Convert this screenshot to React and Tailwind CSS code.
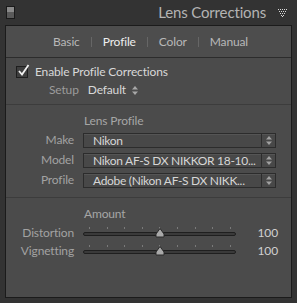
import React from 'react';

const font = { fontFamily: 'Lato, "Liberation Sans", sans-serif', letterSpacing: '-0.15px' };

const Stepper = ({ className = '' }) => (
  <svg width="6" height="9" viewBox="0 0 6 9" className={className}>
    <path d="M3 0 L6 3.5 L0 3.5 Z" fill="currentColor" />
    <path d="M3 9 L6 5.5 L0 5.5 Z" fill="currentColor" />
  </svg>
);

const Select = ({ label, value }) => (
  <div className="flex items-center h-[20px]">
    <div className="w-[68px] text-right text-[#a2a2a2] text-[12px]">{label}</div>
    <div className="ml-[9px] w-[193px] h-[15px] flex border border-[#2c2c2c] bg-[#484848] shadow-[inset_0_1px_0_#555]">
      <div className="flex-1 pl-[9px] text-[12px] leading-[14px] text-[#d6d6d6] whitespace-nowrap tracking-[-0.3px]">{value}</div>
      <div className="w-[14px] border-l border-[#2c2c2c] flex items-center justify-center text-[#a0a0a0]">
        <Stepper />
      </div>
    </div>
  </div>
);

const Slider = ({ label, value, pos }) => (
  <div className="flex items-center h-[18px]">
    <div className="w-[68px] text-right text-[#a2a2a2] text-[12px]">{label}</div>
    <div className="ml-[9px] w-[153px] relative h-[12px]">
      <div className="absolute left-0 right-0 top-[5px] h-[4px] rounded-full bg-[#3a3a3a] border border-[#1f1f1f]" />
      {[0, 1, 2, 3, 4, 5, 6, 7, 8].map((i) => (
        <div
          key={i}
          className="absolute top-0 w-px h-[2px] bg-[#7a7a7a]"
          style={{ left: 6 + i * 17.6 }}
        />
      ))}
      <svg width="10" height="10" viewBox="0 0 10 10" className="absolute top-[1px]" style={{ left: pos - 5 }}>
        <path d="M5 0.5 L9 6 L9 9 L1 9 L1 6 Z" fill="#a9a9a9" stroke="#2a2a2a" strokeWidth="1" />
      </svg>
    </div>
    <div className="flex-1 text-right pr-[13px] text-[#d0d0d0] text-[12px]">{value}</div>
  </div>
);

export default function App() {
  return (
    <div className="w-[297px] h-[303px] bg-[#333333] overflow-hidden" style={font}>
      <div className="h-[25px] flex items-center relative">
        <div className="ml-[6px] w-[9px] h-[13px] border border-[#1a1a1a] flex flex-col">
          <div className="h-[5px] bg-[#8a8a8a]" />
          <div className="flex-1 bg-[#5a5a5a]" />
        </div>
        <div className="ml-auto mr-[31px] text-[#b4b4b4] text-[15px]">Lens Corrections</div>
        <svg width="9" height="8" viewBox="0 0 9 8" className="absolute right-[10px] top-[9px]">
          {[
            [0, 0], [2, 0], [4, 0], [6, 0], [8, 0],
            [1, 2], [3, 2], [5, 2], [7, 2],
            [2, 4], [4, 4], [6, 4],
            [3, 6], [5, 6],
          ].map(([x, y], i) => (
            <rect key={i} x={x} y={y} width="1" height="1" fill="#d8d8d8" />
          ))}
          <rect x="4" y="7" width="1" height="1" fill="#d8d8d8" />
        </svg>
      </div>

      <div className="mx-[5px] h-[273px] border border-[#1b1b1b] bg-[#4b4b4b]">
        <div className="h-[32px] flex items-center justify-center border-b border-[#2c2c2c] bg-[#4d4d4d] text-[12px] pl-[4px]">
          <span className="text-[#b8b8b8]">Basic</span>
          <span className="mx-[11px] w-px h-[10px] bg-[#666]" />
          <span className="text-[#eeeeee]">Profile</span>
          <span className="mx-[11px] w-px h-[10px] bg-[#666]" />
          <span className="text-[#b8b8b8]">Color</span>
          <span className="mx-[11px] w-px h-[10px] bg-[#666]" />
          <span className="text-[#b8b8b8]">Manual</span>
        </div>

        <div className="pt-[7px] pb-[6px] border-b border-[#3c3c3c]">
          <div className="flex items-center h-[14px] pl-[10px]">
            <div className="w-[12px] h-[12px] border border-[#1e1e1e] bg-[#3e3e3e] relative">
              <svg width="13" height="13" viewBox="0 0 13 13" className="absolute left-[0px] top-[-3px]">
                <path d="M2 7 L5 10.5 L11.5 1" fill="none" stroke="#f0f0f0" strokeWidth="1.8" />
              </svg>
            </div>
            <span className="ml-[7px] text-[12px] text-[#d8d8d8]">Enable Profile Corrections</span>
          </div>
          <div className="flex items-center h-[16px] mt-[3px] pl-[43px]">
            <span className="text-[12px] text-[#9c9c9c]">Setup</span>
            <span className="ml-[9px] text-[12px] text-[#d8d8d8]">Default</span>
            <Stepper className="ml-[6px] text-[#a8a8a8]" />
          </div>
        </div>

        <div className="pt-[7px] pb-[7px] border-b border-[#3c3c3c]">
          <div className="pl-[78px] text-[12px] text-[#a6a6a6] h-[17px] leading-[17px]">Lens Profile</div>
          <div className="mt-[1px]">
            <Select label="Make" value="Nikon" />
            <Select label="Model" value="Nikon AF-S DX NIKKOR 18-10..." />
            <Select label="Profile" value="Adobe (Nikon AF-S DX NIKK..." />
          </div>
        </div>

        <div className="pt-[7px]">
          <div className="pl-[78px] text-[12px] text-[#a6a6a6] h-[17px] leading-[17px] mb-[2px]">Amount</div>
          <Slider label="Distortion" value="100" pos={77} />
          <Slider label="Vignetting" value="100" pos={77} />
        </div>
      </div>
    </div>
  );
}
